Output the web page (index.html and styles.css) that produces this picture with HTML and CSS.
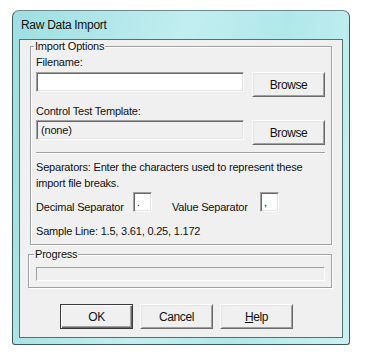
FILE: index.html
```html
<!DOCTYPE html>
<html lang="en">
<head>
    <meta charset="UTF-8">
    <title>Raw Data Import</title>
    <link rel="stylesheet" href="styles.css">
</head>
<body>
    <div class="window">
        <div class="titlebar">Raw Data Import</div>
        <div class="client">
            <fieldset class="group options">
                <legend>Import Options</legend>
                <div class="label first">Filename:</div>
                <div class="row">
                    <input type="text" class="field" id="fileName">
                    <button class="btn browse">Browse</button>
                </div>
                <div class="label second">Control Test Template:</div>
                <div class="row">
                    <div class="field readonly">(none)</div>
                    <button class="btn browse">Browse</button>
                </div>
                <div class="divider"></div>
                <p class="note">Separators: Enter the characters used to represent these import file breaks.</p>
                <div class="sep-row">
                    <span class="sep-label decimal">Decimal Separator</span>
                    <span class="sep-box">.</span>
                    <span class="sep-label value">Value Separator</span>
                    <span class="sep-box">,</span>
                </div>
                <div class="sample">Sample Line: 1.5, 3.61, 0.25, 1.172</div>
            </fieldset>
            <fieldset class="group progress">
                <legend>Progress</legend>
                <div class="bar"></div>
            </fieldset>
            <div class="buttons">
                <button class="btn default">OK</button>
                <button class="btn">Cancel</button>
                <button class="btn"><u>H</u>elp</button>
            </div>
        </div>
    </div>
</body>
</html>
```

FILE: styles.css
```css
body {
    margin: 0;
    background-color: white;
    font-family: "Liberation Sans", Arial, sans-serif;
    font-size: 11px;
    color: #111;
}
.window {
    box-sizing: border-box;
    width: 338px;
    height: 335px;
    margin: 10px 0 0 12px;
    padding: 0 6px 6px 6px;
    border: 1px solid #44585a;
    border-top-color: #6f8a8c;
    border-radius: 7px 7px 3px 3px;
    background: linear-gradient(100deg, #9edfe1 0%, #c2eef0 45%, #b0e8ea 70%, #c9f1f2 100%);
}
.titlebar {
    height: 28px;
    line-height: 28px;
    padding-left: 2px;
    font-size: 12px;
    letter-spacing: -0.3px;
}
.client {
    box-sizing: border-box;
    height: 299px;
    border: 1px solid #56706f;
    background-color: #f0f0f0;
    letter-spacing: -0.2px;
}
.group {
    margin: 0 10px;
    border: 1px solid #a0a0a0;
    box-shadow: inset 1px 1px #fff, 1px 1px #fff;
    padding: 0 6px 6px 5px;
}
.group legend {
    padding: 0 1px;
    margin-left: -2px;
    line-height: 13px;
}
.progress {
    margin: 3px 10px 0 8px;
    padding-left: 7px;
}
.label {
    line-height: 14px;
}
.label.first {
    margin-top: 2px;
}
.label.second {
    margin-top: 7px;
}
.row {
    display: flex;
    justify-content: space-between;
    align-items: flex-start;
    margin-top: 3px;
}
.label.second + .row {
    margin-top: 2px;
}
.field {
    box-sizing: border-box;
    width: 208px;
    height: 20px;
    margin: 0;
    border: 1px solid;
    border-color: #a0a0a0 #fff #fff #a0a0a0;
    box-shadow: inset 1px 1px #696969, inset -1px -1px #e3e3e3;
    background-color: white;
    font: inherit;
    padding: 0 4px;
    outline: none;
}
.field.readonly {
    background-color: #f0f0f0;
    line-height: 18px;
}
.btn {
    box-sizing: border-box;
    width: 73px;
    height: 25px;
    margin: 0;
    padding: 0;
    border: 1px solid;
    border-color: #fff #696969 #696969 #fff;
    box-shadow: inset 1px 1px #e3e3e3, inset -1px -1px #a0a0a0;
    background-color: #f0f0f0;
    font: inherit;
    font-size: 12px;
    letter-spacing: -0.4px;
    color: #111;
}
.btn.default {
    border-color: #3a3a3a;
    box-shadow: inset 1px 1px #fff, inset -1px -1px #696969, inset -2px -2px #a0a0a0;
}
.divider {
    margin-top: 7px;
    border-top: 1px solid #a0a0a0;
    border-bottom: 1px solid #fff;
}
.note {
    margin: 5px 0 0 0;
    line-height: 16px;
}
.sep-row {
    display: flex;
    align-items: flex-end;
    margin-top: 1px;
}
.sep-label {
    line-height: 14px;
    margin-bottom: -2px;
}
.sep-label.decimal {
    width: 97px;
}
.sep-label.value {
    width: 88px;
    margin-left: 20px;
}
.sep-box {
    box-sizing: border-box;
    width: 19px;
    height: 20px;
    padding-left: 3px;
    line-height: 18px;
    border: 1px solid;
    border-color: #a0a0a0 #fff #fff #a0a0a0;
    box-shadow: inset 1px 1px #696969, inset -1px -1px #e3e3e3;
    background-color: white;
}
.sample {
    margin-top: 12px;
    line-height: 14px;
}
.bar {
    height: 14px;
    margin-top: 6px;
    border: 1px solid;
    border-color: #a0a0a0 #fff #fff #a0a0a0;
    box-sizing: border-box;
}
.buttons {
    display: flex;
    gap: 7px;
    margin: 16px 0 0 40px;
}
```
